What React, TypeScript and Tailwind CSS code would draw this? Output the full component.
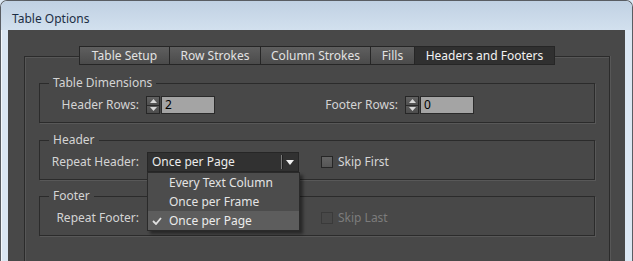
import React from "react";

const font = { fontFamily: '"Noto Sans", "Open Sans", sans-serif' };

function Spinner() {
  return (
    <div className="flex flex-col w-[14px] h-[18px] border border-[#262626] bg-[#555555]">
      <div className="flex-1 flex items-center justify-center border-b border-[#2a2a2a] bg-gradient-to-b from-[#626262] to-[#505050]">
        <svg width="7" height="4" viewBox="0 0 7 4"><path d="M0 4 L3.5 0 L7 4 Z" fill="#d8d8d8" /></svg>
      </div>
      <div className="flex-1 flex items-center justify-center bg-gradient-to-b from-[#5a5a5a] to-[#4c4c4c]">
        <svg width="7" height="4" viewBox="0 0 7 4"><path d="M0 0 L3.5 4 L7 0 Z" fill="#d8d8d8" /></svg>
      </div>
    </div>
  );
}

function NumInput({ value }: { value: string }) {
  return (
    <div className="ml-[1px] w-[54px] h-[18px] bg-[#a4a4a4] border border-[#2a2a2a] pl-[3px] text-[12px] leading-[16px] text-black">
      {value}
    </div>
  );
}

function Combo({ value }: { value: string }) {
  return (
    <div className="w-[152px] h-[20px] bg-[#313131] border border-[#262626] flex items-center">
      <span className="flex-1 pl-[4px] text-[#ececec] text-[12px] leading-[16px]">{value}</span>
      <div className="w-[2px] h-[14px] border-l border-[#7a7a7a] border-r border-r-[#202020] mr-[3px]" />
      <svg width="8" height="5" viewBox="0 0 8 5" className="mr-[4px]"><path d="M0 0 L8 0 L4 5 Z" fill="#f0f0f0" /></svg>
    </div>
  );
}

function Check({ label, disabled }: { label: string; disabled?: boolean }) {
  return (
    <div className="flex items-center ml-[22px]">
      <div
        className={
          disabled
            ? "w-[12px] h-[12px] border border-[#3a3a3a] bg-[#484848]"
            : "w-[12px] h-[12px] border border-[#262626] bg-gradient-to-b from-[#646464] to-[#565656]"
        }
      />
      <span className={disabled ? "ml-[5px] text-[12px] text-[#7c7c7c]" : "ml-[5px] text-[12px] text-[#d6d6d6]"}>{label}</span>
    </div>
  );
}

function Group({ title, children, className }: { title: string; children: React.ReactNode; className?: string }) {
  return (
    <fieldset
      className={
        "mx-[14px] border border-[#2b2b2b] shadow-[1px_1px_0_#585858] " + (className || "")
      }
    >
      <legend className="ml-[9px] px-[4px] text-[12px] leading-[16px] text-[#d4d4d4]">{title}</legend>
      <div className="pt-[4px] pb-[7px] h-[31px] flex items-center">{children}</div>
    </fieldset>
  );
}

const tabs = [
  { label: "Table Setup", w: "w-[91px]", first: true },
  { label: "Row Strokes", w: "w-[91px]" },
  { label: "Column Strokes", w: "w-[110px]" },
  { label: "Fills", w: "w-[44px]" },
  { label: "Headers and Footers", w: "w-[140px]", active: true },
];

export default function App() {
  return (
    <div style={font} className="w-[633px] h-[261px] overflow-hidden bg-[#dbe7f3]">
      <div className="w-[633px] h-[261px] border-x border-t border-[#595d63] rounded-t-[7px] flex flex-col bg-[#dbe7f3] shadow-[inset_1px_1px_0_rgba(255,255,255,0.7)]">
        <div className="h-[29px] shrink-0 pl-[11px] pt-[10px] rounded-t-[6px] bg-gradient-to-b from-[#c0d1e3] to-[#d2e0ee] text-[12px] leading-[16px] text-[#1c2e44]">
          Table Options
        </div>
        <div className="flex-1 mx-[7px] bg-[#484848] pt-[26px] pl-[16px] pr-[15px]">
          <div className="h-full border-l border-t border-r border-[#2b2b2b] shadow-[inset_1px_1px_0_#575757,1px_0_0_#575757]">
            <div className="flex justify-center -mt-[11px]">
              {tabs.map((t) => (
                <div
                  key={t.label}
                  className={
                    t.w +
                    " h-[19px] flex items-center justify-center text-[12px] leading-[16px] border-y border-r border-[#262626] " +
                    (t.first ? "border-l " : "") +
                    (t.active
                      ? "bg-[#303030] text-[#f2f2f2]"
                      : "bg-gradient-to-b from-[#5f5f5f] to-[#4b4b4b] text-[#e2e2e2]")
                  }
                >
                  {t.label}
                </div>
              ))}
            </div>

            <Group title="Table Dimensions" className="mt-[10px]">
              <span className="w-[99px] text-right text-[12px] text-[#d4d4d4]">Header Rows:</span>
              <div className="ml-[7px] flex items-center">
                <Spinner />
                <NumInput value="2" />
              </div>
              <span className="w-[183px] text-right text-[12px] text-[#d4d4d4]">Footer Rows:</span>
              <div className="ml-[7px] flex items-center">
                <Spinner />
                <NumInput value="0" />
              </div>
            </Group>

            <Group title="Header" className="mt-[9px]">
              <span className="w-[99px] text-right text-[12px] text-[#d4d4d4]">Repeat Header:</span>
              <div className="ml-[8px] relative">
                <Combo value="Once per Page" />
                <div className="absolute left-0 top-full w-[153px] bg-[#4c4c4c] border border-[#2a2a2a] shadow-[3px_3px_3px_rgba(0,0,0,0.45)] z-10 py-0">
                  <div className="h-[19px] flex items-center pl-[21px] text-[12px] text-[#e4e4e4]">Every Text Column</div>
                  <div className="h-[19px] flex items-center pl-[21px] text-[12px] text-[#e4e4e4]">Once per Frame</div>
                  <div className="h-[19px] flex items-center bg-[#5d5d5d] text-[12px] text-[#ececec] relative">
                    <svg width="10" height="8" viewBox="0 0 10 8" className="ml-[4px] mr-[7px]">
                      <path d="M1 4 L4 7 L9 1" stroke="#e0e0e0" strokeWidth="1.8" fill="none" />
                    </svg>
                    Once per Page
                  </div>
                </div>
              </div>
              <Check label="Skip First" />
            </Group>

            <Group title="Footer" className="mt-[8px]">
              <span className="w-[99px] text-right text-[12px] text-[#d4d4d4]">Repeat Footer:</span>
              <div className="ml-[8px] w-[152px] h-[20px] bg-[#313131] border border-[#262626]" />
              <Check label="Skip Last" disabled />
            </Group>
          </div>
        </div>
      </div>
    </div>
  );
}
